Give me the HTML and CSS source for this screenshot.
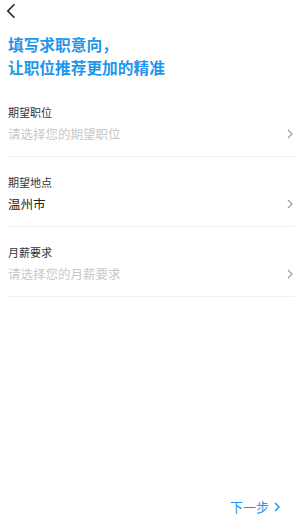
FILE: index.html
```html
<!DOCTYPE html>
<html lang="zh-CN">

<head>
    <meta charset="UTF-8">
    <meta name="viewport" content="width=device-width, initial-scale=1.0">
    <title>求职意向</title>
    <link rel="stylesheet" href="styles.css">
</head>

<body>
    <div class="page">
        <div class="nav">
            <svg class="back" width="10" height="16" viewBox="0 0 10 16">
                <path d="M8.5 1.2 L1.8 8 L8.5 14.8" fill="none" stroke="#222" stroke-width="1.6" />
            </svg>
        </div>

        <h1 class="title">填写求职意向，<br>让职位推荐更加的精准</h1>

        <div class="form">
            <div class="row">
                <div class="label">期望职位</div>
                <div class="value placeholder">请选择您的期望职位</div>
                <svg class="arrow" width="6" height="10" viewBox="0 0 6 10">
                    <path d="M1 1 L5 5 L1 9" fill="none" stroke="#9a9a9a" stroke-width="1.1" />
                </svg>
            </div>
            <div class="row">
                <div class="label">期望地点</div>
                <div class="value">温州市</div>
                <svg class="arrow" width="6" height="10" viewBox="0 0 6 10">
                    <path d="M1 1 L5 5 L1 9" fill="none" stroke="#9a9a9a" stroke-width="1.1" />
                </svg>
            </div>
            <div class="row">
                <div class="label">月薪要求</div>
                <div class="value placeholder">请选择您的月薪要求</div>
                <svg class="arrow" width="6" height="10" viewBox="0 0 6 10">
                    <path d="M1 1 L5 5 L1 9" fill="none" stroke="#9a9a9a" stroke-width="1.1" />
                </svg>
            </div>
        </div>

        <div class="footer">
            <span class="next">下一步
                <svg width="6" height="10" viewBox="0 0 6 10">
                    <path d="M1 1 L5 5 L1 9" fill="none" stroke="#2196f0" stroke-width="1.5" />
                </svg>
            </span>
        </div>
    </div>
</body>

</html>
```

FILE: styles.css
```css
body {
    margin: 0;
    background-color: #fff;
    font-family: "Noto Sans CJK SC", "Noto Sans", sans-serif;
}

.page {
    height: 525px;
    display: flex;
    flex-direction: column;
    box-sizing: border-box;
}

.nav {
    height: 24px;
    padding: 3px 0 0 6px;
    box-sizing: border-box;
}

.back {
    display: block;
}

.title {
    margin: 9px 0 0;
    padding-left: 8px;
    font-size: 15.7px;
    font-weight: bold;
    line-height: 23px;
    color: #1e96ec;
}

.form {
    margin-top: 8px;
}

.row {
    position: relative;
    margin: 0 5px 0 8px;
    padding: 17px 0 12px;
    border-bottom: 1px solid #f1f1f1;
}

.label {
    font-size: 11px;
    line-height: 16px;
    color: #333;
}

.value {
    margin-top: 4px;
    font-size: 12.5px;
    line-height: 20px;
    color: #222;
}

.placeholder {
    color: #c8c8c8;
}

.arrow {
    position: absolute;
    right: 2px;
    top: 42px;
}

.footer {
    margin-top: auto;
    padding: 0 20px 8px 0;
    display: flex;
    justify-content: flex-end;
}

.next {
    display: flex;
    align-items: center;
    gap: 5px;
    font-size: 13px;
    line-height: 20px;
    color: #2196f0;
}
```
